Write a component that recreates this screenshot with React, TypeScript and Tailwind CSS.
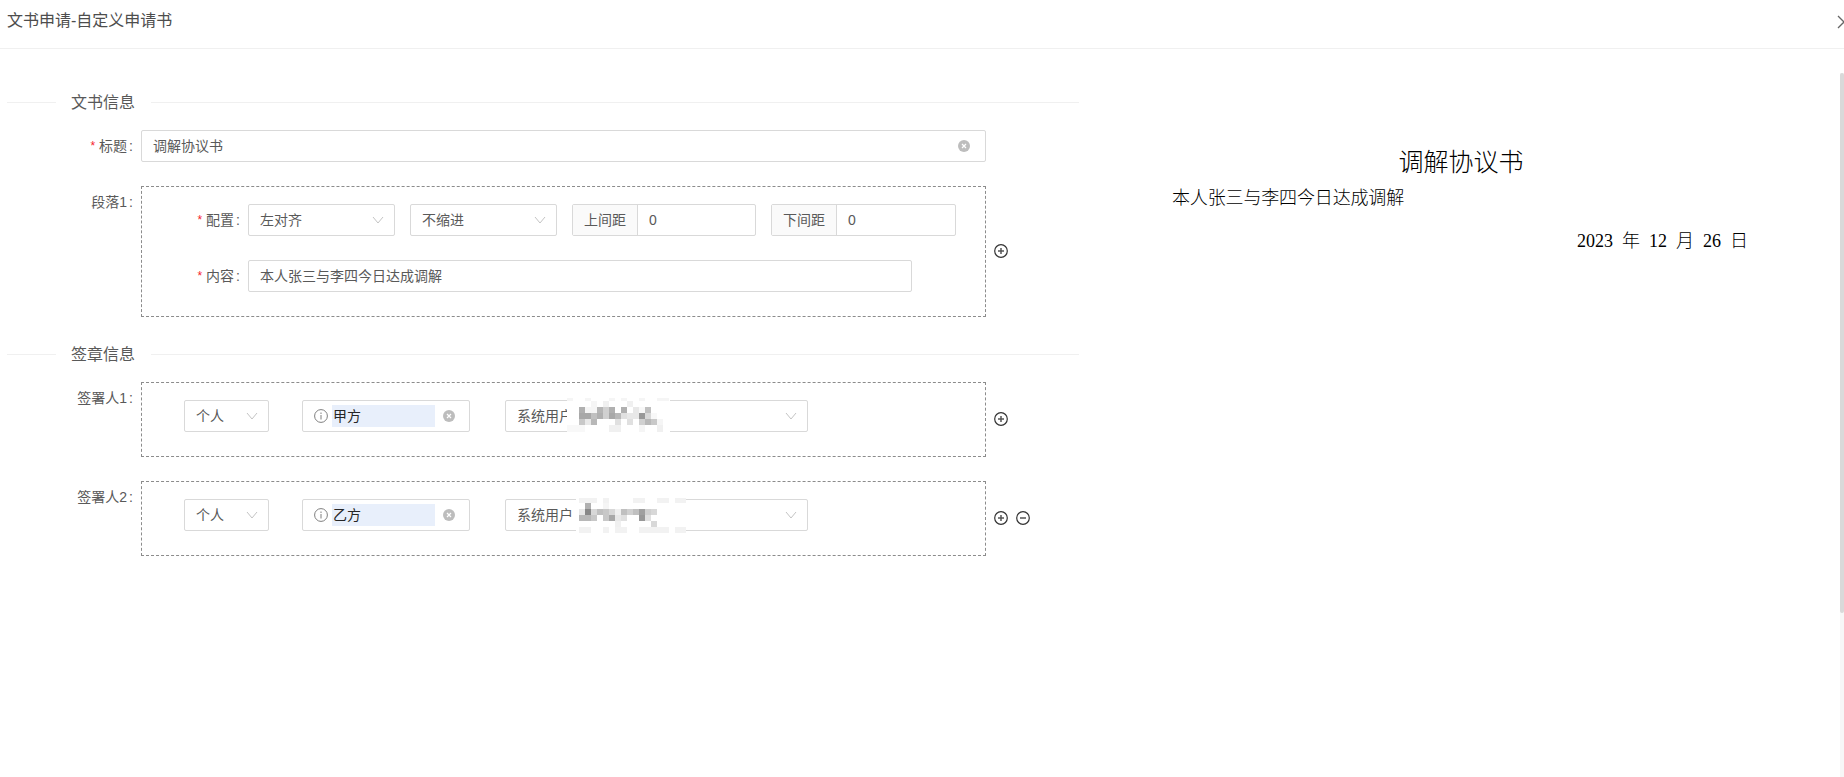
import React from "react";

const SANS = "font-['Liberation_Sans','Noto_Sans_CJK_SC',sans-serif]";

function Chevron() {
  return (
    <svg width="12" height="8" viewBox="0 0 12 8" fill="none" className="shrink-0">
      <path d="M1 1L6 7L11 1" stroke="#c4c4c4" strokeWidth="1" />
    </svg>
  );
}

function Clear() {
  return (
    <svg width="12" height="12" viewBox="0 0 12 12" className="shrink-0">
      <circle cx="6" cy="6" r="6" fill="#bdbdbd" />
      <path d="M4 4L8 8M8 4L4 8" stroke="#fff" strokeWidth="1.2" />
    </svg>
  );
}

function Info() {
  return (
    <svg width="14" height="14" viewBox="0 0 14 14" fill="none" className="shrink-0">
      <circle cx="7" cy="7" r="6.4" stroke="#7f7f7f" />
      <path d="M7 6V10.5" stroke="#7f7f7f" />
      <path d="M7 3.5V5" stroke="#7f7f7f" />
    </svg>
  );
}

function RoundBtn({ minus }: { minus?: boolean }) {
  return (
    <svg width="14" height="14" viewBox="0 0 14 14" fill="none" className="shrink-0">
      <circle cx="7" cy="7" r="6.3" stroke="#333" strokeWidth="1.2" />
      <path d="M4 7H10" stroke="#555" strokeWidth="1.5" />
      {!minus && <path d="M7 4V10" stroke="#555" strokeWidth="1.5" />}
    </svg>
  );
}

function Mosaic({
  rows,
  heights,
  whiteX,
  width,
  className,
}: {
  rows: string[];
  heights: number[];
  whiteX: number;
  width: number;
  className: string;
}) {
  const total = heights.reduce((a, b) => a + b, 0);
  let y = 0;
  return (
    <svg
      width={width}
      height={total}
      viewBox={`0 0 ${width} ${total}`}
      shapeRendering="crispEdges"
      className={className}
    >
      <rect x={whiteX} y="0" width={width - whiteX} height={total} fill="#fff" />
      {rows.map((row, r) => {
        const cells = row.split(" ");
        const top = y;
        y += heights[r];
        return cells.map((c, i) =>
          c === ".." ? null : (
            <rect key={`${r}-${i}`} x={i * 6} y={top} width="6" height={heights[r]} fill={`#${c}${c}${c}`} />
          ),
        );
      })}
    </svg>
  );
}

const P1 = [
  "f5 .. .. f5 .. .. .. f5 .. f5 .. .. f5 .. .. f5 f5",
  ".. .. .. .. f5 .. f0 .. .. .. f0 .. .. .. .. .. ..",
  ".. .. b0 f5 f5 b5 d0 b0 .. b0 .. e8 f8 c0 .. .. ..",
  ".. .. a8 a8 c0 b0 d0 a8 b8 e0 e8 e8 98 d8 f8 .. ..",
  ".. .. c8 e8 b8 .. .. .. e0 .. e0 .. d0 b8 c8 f5 ..",
  "f8 f8 f8 .. .. .. .. f0 f0 .. .. .. f5 .. .. f0 ..",
];

const P2 = [
  ".. f2 f2 f2 .. f2 .. .. .. .. f2 f2 .. .. f2 f2 .. f2 f2",
  ".. .. b0 .. .. f5 .. .. .. .. .. .. .. .. .. .. .. .. ..",
  ".. e8 88 d8 c0 c8 d8 f0 c0 d0 c0 a0 d0 d8 .. .. .. .. ..",
  ".. b8 b8 c8 .. c8 a8 e8 e0 .. .. 98 e0 .. .. .. .. .. ..",
  ".. .. .. .. .. .. .. f0 .. .. .. .. .. d8 .. .. .. .. ..",
  ".. f2 f2 .. .. f2 .. f2 f2 .. .. f2 f2 f2 f2 f2 .. f2 f2",
];

function Field({ children, className }: { children?: React.ReactNode; className: string }) {
  return (
    <div
      className={`flex h-8 shrink-0 items-center rounded-[2px] border border-[#d9d9d9] bg-white text-sm text-[#595959] ${className}`}
    >
      {children}
    </div>
  );
}

function Select({ value, className }: { value: string; className: string }) {
  return (
    <Field className={`justify-between pl-[11px] pr-[10px] ${className}`}>
      <span>{value}</span>
      <Chevron />
    </Field>
  );
}

function Addon({ label, className }: { label: string; className: string }) {
  return (
    <Field className={className}>
      <span className="flex h-full w-[65px] items-center justify-center border-r border-[#d9d9d9] bg-[#fafafa] text-[#595959]">
        {label}
      </span>
      <span className="pl-[11px]">0</span>
    </Field>
  );
}

function Required() {
  return <span className="mr-1 text-xs text-[#f5222d]">*</span>;
}

function Section({ title, className }: { title: string; className: string }) {
  return (
    <div className={`flex h-[22px] items-center ${className}`}>
      <div className="h-px w-[49px] bg-[#f0f0f0]" />
      <span className="pt-[2px] pl-[15px] pr-4 text-base leading-[22px] text-[#595959]">{title}</span>
      <div className="h-px flex-1 bg-[#f0f0f0]" />
    </div>
  );
}

function LabelText({ text }: { text: string }) {
  return (
    <>
      {text}
      <span className="ml-[2px]">:</span>
    </>
  );
}

function Row({
  label,
  required,
  children,
  after,
  className,
}: {
  label: string;
  required?: boolean;
  children: React.ReactNode;
  after?: React.ReactNode;
  className?: string;
}) {
  return (
    <div className={`flex ${className ?? ""}`}>
      <div className="flex h-[32px] w-[134px] shrink-0 items-center justify-end pr-2 text-sm text-[#595959]">
        {required && <Required />}
        <LabelText text={label} />
      </div>
      {children}
      {after}
    </div>
  );
}

function Signer({
  label,
  role,
  user,
  mosaic,
  minus,
  className,
}: {
  label: string;
  role: string;
  user: string;
  mosaic: React.ReactNode;
  minus?: boolean;
  className: string;
}) {
  return (
    <Row
      label={label}
      className={className}
      after={
        <div className="ml-2 flex items-center gap-2 pb-[2px]">
          <RoundBtn />
          {minus && <RoundBtn minus />}
        </div>
      }
    >
      <div className="flex h-[75px] w-[845px] shrink-0 items-start border border-dashed border-[#8c8c8c] pl-[42px] pt-[17px]">
        <Select value="个人" className="w-[85px]" />
        <Field className="ml-[33px] w-[168px] pl-[11px]">
          <Info />
          <span className="ml-[4px] flex h-[22px] w-[103px] items-center bg-[#e8effb] pl-px text-[#262626]">{role}</span>
          <span className="ml-[8px]">
            <Clear />
          </span>
        </Field>
        <Field className="relative ml-[35px] w-[303px] justify-between pl-[11px] pr-[10px]">
          <span>{user}</span>
          <Chevron />
          {mosaic}
        </Field>
      </div>
    </Row>
  );
}

export default function App() {
  return (
    <div className={`relative h-[777px] w-full overflow-hidden bg-white ${SANS}`}>
      <header className="flex h-[49px] items-center justify-between overflow-hidden border-b border-[#f0f0f0] pb-[6px] pl-[7px]">
        <span className="text-base leading-[22px] text-[#4d4d4d]">文书申请-自定义申请书</span>
        <svg width="14" height="14" viewBox="0 0 14 14" fill="none" className="-mr-[7px] mt-[2px]">
          <path d="M1 1L13 13M13 1L1 13" stroke="#666" strokeWidth="1.3" />
        </svg>
      </header>

      <main className="flex">
        <section className="w-[1079px] shrink-0 pl-[7px]">
          <Section title="文书信息" className="mt-[42px]" />
          <Row label="标题" required className="mt-[17px]">
            <Field className="w-[845px] justify-between pl-[11px] pr-[15px]">
              <span>调解协议书</span>
              <Clear />
            </Field>
          </Row>

          <Row
            label="段落1"
            className="mt-6"
            after={
              <div className="ml-2 flex items-center pb-[2px]">
                <RoundBtn />
              </div>
            }
          >
            <div className="flex h-[131px] w-[845px] shrink-0 flex-col gap-6 border border-dashed border-[#8c8c8c] pt-[17px]">
              <div className="flex">
                <div className="flex h-8 w-[106px] shrink-0 items-center justify-end pr-2 text-sm text-[#595959]">
                  <Required />
                  <LabelText text="配置" />
                </div>
                <div className="flex gap-[15px]">
                  <Select value="左对齐" className="w-[147px]" />
                  <Select value="不缩进" className="w-[147px]" />
                  <Addon label="上间距" className="w-[184px]" />
                  <Addon label="下间距" className="w-[185px]" />
                </div>
              </div>
              <div className="flex">
                <div className="flex h-8 w-[106px] shrink-0 items-center justify-end pr-2 text-sm text-[#595959]">
                  <Required />
                  <LabelText text="内容" />
                </div>
                <Field className="w-[664px] pl-[11px]">本人张三与李四今日达成调解</Field>
              </div>
            </div>
          </Row>

          <Section title="签章信息" className="mt-[26px]" />
          <Signer
            label="签署人1"
            role="甲方"
            user="系统用户"
            className="mt-[17px]"
            mosaic={
              <Mosaic
                rows={P1}
                heights={[3, 6, 6, 6, 6, 7]}
                whiteX={0}
                width={103}
                className="absolute -top-[3px] left-[61px]"
              />
            }
          />
          <Signer
            label="签署人2"
            role="乙方"
            user="系统用户"
            minus
            className="mt-6"
            mosaic={
              <Mosaic
                rows={P2}
                heights={[5, 6, 6, 6, 6, 6]}
                whiteX={3}
                width={113}
                className="absolute -top-[2px] left-[67px]"
              />
            }
          />
        </section>

        <section className="ml-[93px] w-[578px] shrink-0 pt-[99px] font-['Liberation_Serif','Noto_Sans_CJK_SC',serif] text-black">
          <h1 className="text-center text-[25px] leading-[30px] font-light">调解协议书</h1>
          <p className="mt-2 text-lg leading-6 font-light tracking-[-0.15px]">本人张三与李四今日达成调解</p>
          <p className="mt-[19px] pr-[2px] text-right text-lg leading-6 font-light">
            2023&nbsp;&nbsp;年&nbsp;&nbsp;12&nbsp;&nbsp;月&nbsp;&nbsp;26&nbsp;&nbsp;日
          </p>
        </section>
      </main>

      <div className="absolute top-[73px] right-0 bottom-0 w-1 bg-[#f7f7f7]">
        <div className="h-[540px] w-full rounded-[2px] bg-[#d9d9d9]" />
      </div>
    </div>
  );
}
